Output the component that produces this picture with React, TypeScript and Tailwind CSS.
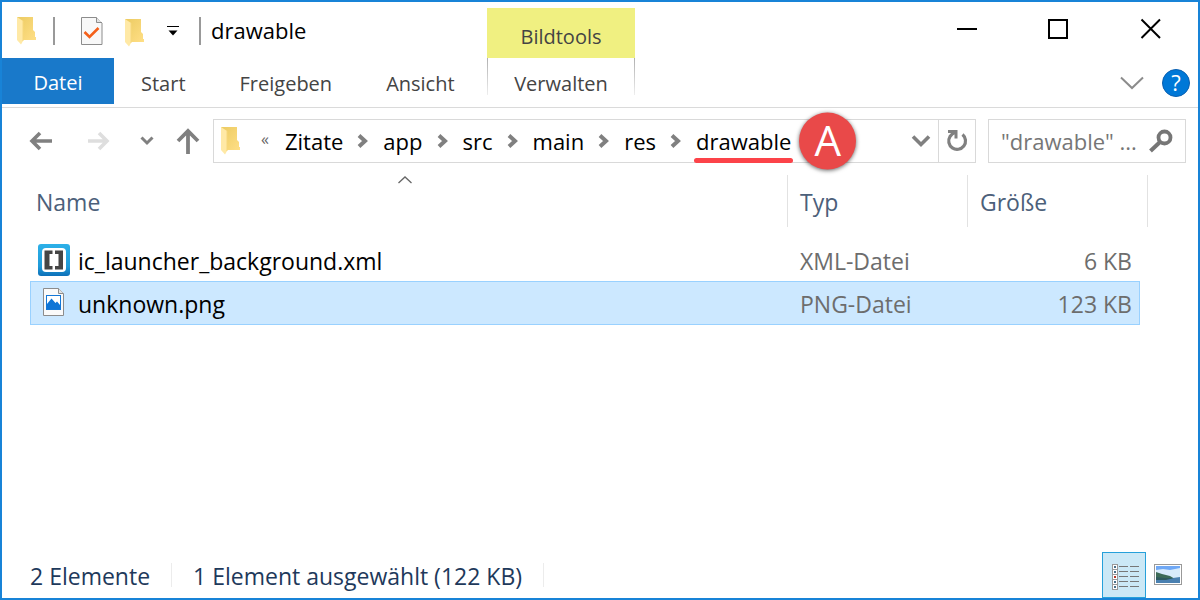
import { useState } from "react";

interface FileEntry {
  name: string;
  type: string;
  size: string;
  icon: "xml" | "png";
}

const files: FileEntry[] = [
  { name: "ic_launcher_background.xml", type: "XML-Datei", size: "6 KB", icon: "xml" },
  { name: "unknown.png", type: "PNG-Datei", size: "123 KB", icon: "png" },
];

const tabs = ["Start", "Freigeben", "Ansicht"];
const crumbs = ["Zitate", "app", "src", "main", "res", "drawable"];

function FolderIcon({ id }: { id: string }) {
  return (
    <svg width="20" height="28" viewBox="0 0 20 28" className="shrink-0">
      <defs>
        <linearGradient id={id} x1="0" y1="0" x2="1" y2="1">
          <stop offset="0" stopColor="#eccb62" />
          <stop offset="1" stopColor="#ffdf86" />
        </linearGradient>
      </defs>
      <path d="M0 0H16V13L18 15V20H19V23H4Z" fill={`url(#${id})`} />
      <path d="M0 0L6 4V24L4 27.500L0 23Z" fill="#ffe9a6" />
      <path d="M6 4V24" stroke="#f6d77d" strokeWidth="1" />
    </svg>
  );
}

function CheckedPageIcon() {
  return (
    <svg width="22" height="28" viewBox="0 0 22 28">
      <path d="M.5 .5H15.500L21 6V27.500H.5Z" fill="#f8f8f8" stroke="#8c8c8c" />
      <path d="M15.500 .5V5.500H21" fill="#e4e4e4" stroke="#8c8c8c" />
      <path d="M3.500 15L8.500 20L17.500 11" fill="none" stroke="#f4601a" strokeWidth="2.600" />
    </svg>
  );
}

function XmlIcon() {
  return (
    <svg width="32" height="32" viewBox="0 0 32 32">
      <defs>
        <linearGradient id="xml-bg" x1="0" y1="0" x2="0" y2="1">
          <stop offset="0" stopColor="#2cb0e8" />
          <stop offset=".7" stopColor="#1f9ad8" />
          <stop offset="1" stopColor="#0d70b8" />
        </linearGradient>
      </defs>
      <rect width="32" height="32" rx="3" fill="url(#xml-bg)" />
      <rect x="4" y="4" width="24" height="24" rx="4" fill="#fff" />
      <path d="M14.500 6.500H6.500V25.500H14.500V22H11.500V10H14.500Z" fill="#454545" />
      <path d="M17 6.500H25V25.500H17V22H20.500V10H17Z" fill="#454545" />
    </svg>
  );
}

function PngIcon() {
  return (
    <svg width="32" height="32" viewBox="0 0 32 32">
      <path d="M5.500 1.500H20.500L25.500 6.500V28.500H5.500Z" fill="#fafafa" stroke="#8c8c8c" />
      <path d="M20.500 1.500V6.500H25.500" fill="#e4e4e4" stroke="#8c8c8c" />
      <rect x="8.500" y="8.500" width="14" height="14" fill="#fff" stroke="#1478d7" />
      <path d="M9 17L13.500 11.500L17.500 16L19 14.500L22 18V22H9Z" fill="#0f75d6" />
    </svg>
  );
}

function Chevron() {
  return (
    <svg width="12" height="14" viewBox="0 0 12 14" className="shrink-0">
      <path d="M2 1.500L8 7L2 12.500" fill="none" stroke="#808080" strokeWidth="4" />
    </svg>
  );
}

function TitleBar() {
  return (
    <div className="flex items-center pl-[15px] pt-0.5">
      <FolderIcon id="folder-title" />
      <span className="ml-4 h-7 w-0.5 bg-[#999]" />
      <button aria-label="Eigenschaften" className="ml-[26px]">
        <CheckedPageIcon />
      </button>
      <button aria-label="Neuer Ordner" className="ml-[22px] pt-1">
        <FolderIcon id="folder-new" />
      </button>
      <button aria-label="Symbolleiste anpassen" className="ml-[22px]">
        <svg width="12" height="10" viewBox="0 0 12 10">
          <path d="M0 .5H12" stroke="#000" />
          <path d="M1.500 4.500H10.500L6 9.500Z" fill="#000" />
        </svg>
      </button>
      <span className="ml-5 h-7 w-0.5 bg-[#999]" />
      <h1 className="ml-2.5 pb-0.5 text-[22px] leading-7 text-black">drawable</h1>
    </div>
  );
}

function WindowControls() {
  return (
    <div className="flex h-[54px] justify-end pr-px">
      <button aria-label="Minimieren" className="flex w-[92px] items-center justify-center">
        <svg width="22" height="22" viewBox="0 0 22 22">
          <path d="M1 11H21" stroke="#000" strokeWidth="2" />
        </svg>
      </button>
      <button aria-label="Maximieren" className="flex w-[92px] items-center justify-center">
        <svg width="22" height="22" viewBox="0 0 22 22">
          <rect x="1" y="2" width="18" height="18" fill="none" stroke="#000" strokeWidth="2" />
        </svg>
      </button>
      <button aria-label="Schließen" className="flex w-[92px] items-center justify-center">
        <svg width="22" height="22" viewBox="0 0 22 22">
          <path d="M1.500 1.500L20 20M20 1.500L1.500 20" stroke="#000" strokeWidth="2" />
        </svg>
      </button>
    </div>
  );
}

function Ribbon() {
  return (
    <header className="grid grid-cols-[485px_148px_1fr] grid-rows-[56px_49px] border-b border-[#dadada]">
      <TitleBar />
      <div className="mt-1.5 flex items-center justify-center bg-[#f0f081] pt-2 text-xl text-[#444]">
        Bildtools
      </div>
      <WindowControls />
      <nav className="flex items-start text-xl text-[#444]">
        <button className="h-[46px] w-28 shrink-0 bg-[#1979ca] pt-1 text-white">Datei</button>
        {tabs.map((tab) => (
          <button key={tab} className="h-[46px] px-[27px] pt-1.5">
            {tab}
          </button>
        ))}
      </nav>
      <div className="flex justify-between text-xl text-[#444]">
        <span className="h-[37px] w-px bg-gradient-to-b from-[#b0b0b0] to-[#eee]" />
        <button className="h-[46px] pt-1.5">Verwalten</button>
        <span className="h-[37px] w-px bg-gradient-to-b from-[#b0b0b0] to-[#eee]" />
      </div>
      <div className="flex items-center justify-end gap-[18px] pr-2">
        <button aria-label="Menüband erweitern">
          <svg width="24" height="14" viewBox="0 0 24 14">
            <path d="M1 1.500L12 12L23 1.500" fill="none" stroke="#8c8c8c" strokeWidth="2" />
          </svg>
        </button>
        <button
          aria-label="Hilfe"
          className="flex size-7 items-center justify-center rounded-full border border-[#0a5fb0] bg-[#0078d7] text-[22px] text-white"
        >
          ?
        </button>
      </div>
    </header>
  );
}

function NavBar() {
  return (
    <div className="flex items-center pt-[11px] pr-3 pl-[27px]">
      <button aria-label="Zurück">
        <svg width="24" height="20" viewBox="0 0 24 20">
          <path d="M23 10H3M11 2L3 10L11 18" fill="none" stroke="#808080" strokeWidth="3.600" />
        </svg>
      </button>
      <button aria-label="Vorwärts" className="ml-[33px]">
        <svg width="24" height="20" viewBox="0 0 24 20">
          <path d="M2 10H21M13 2L21 10L13 18" fill="none" stroke="#dedede" strokeWidth="3.600" />
        </svg>
      </button>
      <button aria-label="Zuletzt besucht" className="ml-[30px]">
        <svg width="14" height="10" viewBox="0 0 14 10">
          <path d="M1.500 1.500L7 7L12.500 1.500" fill="none" stroke="#808080" strokeWidth="3" />
        </svg>
      </button>
      <button aria-label="Nach oben" className="ml-[21px]">
        <svg width="26" height="26" viewBox="0 0 26 26">
          <path d="M13 26V3M3 13L13 3L23 13" fill="none" stroke="#808080" strokeWidth="3.800" />
        </svg>
      </button>

      <div className="ml-3 flex h-11 flex-1 items-center border border-[#d9d9d9] pl-[7px]">
        <FolderIcon id="folder-path" />
        <span className="ml-5 pb-1 text-base text-[#666]">«</span>
        <ol className="ml-4 flex items-center gap-3.5 text-[22px] text-black">
          {crumbs.map((crumb, i) => (
            <li key={crumb} className="flex items-center gap-3.5">
              {i > 0 && <Chevron />}
              <a href="#" className="relative leading-[42px]">
                {crumb}
                {i === crumbs.length - 1 && (
                  <>
                    <span className="absolute -inset-x-0.5 -bottom-px h-[5px] rounded-full bg-[#fc4349]" />
                    <span className="absolute top-1/2 left-full ml-2 flex size-[57px] -translate-y-1/2 items-center justify-center rounded-full bg-[#e94949] pb-1 text-[42px] leading-none text-white shadow-[0_1px_4px_rgba(0,0,0,0.6)]">
                      A
                    </span>
                  </>
                )}
              </a>
            </li>
          ))}
        </ol>
        <button aria-label="Vorherige Orte" className="ml-auto px-[7px]">
          <svg width="20" height="14" viewBox="0 0 20 14">
            <path d="M2 2.500L10 10.500L18 2.500" fill="none" stroke="#808080" strokeWidth="3.600" />
          </svg>
        </button>
        <button
          aria-label="Aktualisieren"
          className="flex h-full w-[37px] items-center justify-center border-l border-[#d9d9d9]"
        >
          <svg width="24" height="24" viewBox="0 0 24 24" fill="none" stroke="#808080">
            <path d="M17.500 5.500A8.400 8.400 0 1 1 5 7.500Q7 4.500 10 3.500" strokeWidth="3.200" />
            <path d="M3 2.500H11V9.500" strokeWidth="3" />
          </svg>
        </button>
      </div>

      <div className="ml-3 flex h-11 w-[198px] items-center border border-[#d9d9d9] pr-3 pl-3">
        <input
          aria-label="Suchen"
          placeholder={'"drawable" ...'}
          className="w-full min-w-0 text-[22px] outline-none placeholder:text-[#767676]"
        />
        <svg width="24" height="24" viewBox="0 0 24 24" className="shrink-0" fill="none" stroke="#767676">
          <circle cx="15.500" cy="8.500" r="6" strokeWidth="3.800" />
          <path d="M11 13L1.500 22" strokeWidth="4" />
        </svg>
      </div>
    </div>
  );
}

function FileTable() {
  const [selected, setSelected] = useState("unknown.png");

  return (
    <main className="flex-1 pt-3 pr-[50px] pl-7">
      <table className="w-full table-fixed border-separate border-spacing-0 text-[23px] leading-7">
        <colgroup>
          <col />
          <col className="w-[180px]" />
          <col className="w-[172px]" />
          <col className="w-2" />
        </colgroup>
        <thead className="text-left text-[#4c607a]">
          <tr>
            <th className="relative p-0 pb-3 font-normal">
              <div className="absolute inset-x-0 top-px flex justify-center pr-2">
                <svg width="14" height="8" viewBox="0 0 14 8">
                  <path d="M.5 7L7 1L13.500 7" fill="none" stroke="#666" strokeWidth="1.300" />
                </svg>
              </div>
              <div className="flex h-[52px] items-center border-r border-[#e2e2e2] pt-0.5 pl-1.5">Name</div>
            </th>
            <th className="p-0 pb-3 font-normal">
              <div className="flex h-[52px] items-center border-r border-[#e2e2e2] pt-0.5 pl-3">Typ</div>
            </th>
            <th colSpan={2} className="p-0 pb-3 font-normal">
              <div className="flex h-[52px] items-center border-r border-[#e2e2e2] pt-0.5 pl-3">Größe</div>
            </th>
          </tr>
        </thead>
        <tbody>
          {files.map((file) => {
            const active = file.name === selected;
            const cell = active ? "border-y border-[#99d1ff] bg-[#cce8ff] h-11" : "h-[42px]";
            return (
              <tr key={file.name} onClick={() => setSelected(file.name)} aria-selected={active}>
                <td className={`${cell} p-0 text-black ${active ? "border-l pl-[7px]" : "pl-2"}`}>
                  <div className="flex items-center gap-2">
                    {file.icon === "xml" ? <XmlIcon /> : <PngIcon />}
                    <span className="pt-0.5">{file.name}</span>
                  </div>
                </td>
                <td className={`${cell} p-0 pt-0.5 pl-3 text-[#6d6d6d]`}>{file.type}</td>
                <td className={`${cell} p-0 pt-0.5 text-right text-[#6d6d6d] ${active ? "border-r pr-[7px]" : "pr-2"}`}>
                  {file.size}
                </td>
                <td className="p-0" />
              </tr>
            );
          })}
        </tbody>
      </table>
    </main>
  );
}

function StatusBar() {
  return (
    <footer className="flex h-[46px] items-center pr-4 pl-7 text-[23px] text-[#1e395b]">
      <span className="pt-0.5">2 Elemente</span>
      <span className="mx-[21px] h-6 w-px bg-[#ececec]" />
      <span className="pt-0.5">1 Element ausgewählt (122 KB)</span>
      <span className="mx-[21px] h-6 w-px bg-[#ececec]" />
      <button
        aria-label="Details"
        className="ml-auto flex h-full w-11 items-center justify-center border border-[#26a0da] bg-[#cbe8f6] pt-1"
      >
        <svg width="30" height="28" viewBox="0 0 30 28">
          {[0, 1, 2, 3, 4].map((i) => (
            <g key={i}>
              <rect x="3.500" y={1.5 + i * 5} width="5" height="5" fill="#fff" stroke="#999" />
              <rect x="5" y={3 + i * 5} width="2" height="2" fill={i === 2 ? "#b3372a" : "#47708a"} />
              <path d={`M10 ${3.5 + i * 5}H19M21 ${3.5 + i * 5}H30`} stroke="#777" />
            </g>
          ))}
        </svg>
      </button>
      <button aria-label="Große Symbole" className="ml-2">
        <svg width="28" height="22" viewBox="0 0 28 22">
          <rect x=".5" y=".5" width="27" height="20" fill="#fff" stroke="#999" />
          <rect x="2" y="2" width="24" height="17" fill="#6fa8f5" />
          <path d="M2 6L9 5L16 6L26 4V14H2Z" fill="#d8ebfb" />
          <path d="M2 8L8 10L16 12L21 15H2Z" fill="#3d6b57" />
          <path d="M2 14L12 15L26 13V19H2Z" fill="#4a80b0" />
          <path d="M2 13L10 14L20 14L12 16L2 16Z" fill="#2f5a5e" />
        </svg>
      </button>
    </footer>
  );
}

export default function App() {
  return (
    <div className="flex min-h-screen flex-col border-2 border-[#1883d7] bg-white font-['Open_Sans',sans-serif]">
      <Ribbon />
      <NavBar />
      <FileTable />
      <StatusBar />
    </div>
  );
}
